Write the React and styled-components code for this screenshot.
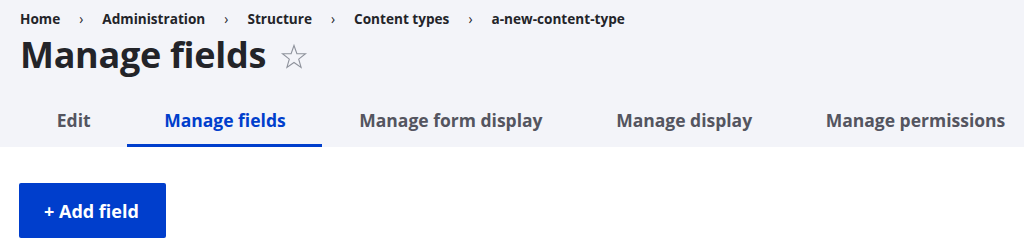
import React from "react";
import styled, { createGlobalStyle } from "styled-components";

const Global = createGlobalStyle`
  html, body { margin: 0; padding: 0; background: #ffffff; }
  body { font-family: "Open Sans", "Noto Sans", sans-serif; color: #232429; }
  * { box-sizing: border-box; }
`;

const Header = styled.header`
  background: #f3f4f9;
  padding: 9px 20px 0;
`;

const Crumbs = styled.ol`
  display: flex;
  align-items: center;
  list-style: none;
  margin: 0;
  padding: 0;
  font-size: 13.6px;
  line-height: 20px;
  font-weight: 700;
  color: #232429;
`;

const Crumb = styled.li`
  display: flex;
  align-items: center;
`;

const Sep = styled.span`
  margin: 0 19px;
  font-weight: 400;
  color: #232429;
`;

const TitleRow = styled.div`
  display: flex;
  align-items: center;
  gap: 14px;
  margin-top: 4px;
`;

const Title = styled.h1`
  margin: 0;
  font-size: 36px;
  line-height: 44px;
  font-weight: 700;
  color: #232429;
  letter-spacing: -0.3px;
`;

const StarButton = styled.span`
  display: inline-flex;
  width: 28px;
  height: 28px;
  margin-top: 4px;
`;

const Tabs = styled.nav`
  display: flex;
  margin-top: 18px;
`;

const Tab = styled.a`
  display: block;
  padding: 13px 36.8px 12px;
  font-size: 17.5px;
  line-height: 24px;
  font-weight: 700;
  color: ${(p) => (p.$active ? "#003ecc" : "#545560")};
  text-decoration: none;
  border-bottom: 3px solid ${(p) => (p.$active ? "#003ecc" : "transparent")};
  white-space: nowrap;
`;

const Content = styled.main`
  padding: 36px 19px;
`;

const Button = styled.button`
  display: inline-flex;
  align-items: center;
  height: 55px;
  padding: 0 27px 0 25px;
  border: 0;
  border-radius: 2px;
  background: #003ecc;
  color: #ffffff;
  font-family: inherit;
  font-size: 18px;
  font-weight: 700;
  line-height: 24px;
`;

const Star = () => (
  <svg width="28" height="28" viewBox="0 0 28 28" fill="none">
    <path
      d="M14 2.5 L16.9 10.6 L25.5 10.8 L18.7 16.1 L21.1 24.4 L14 19.5 L6.9 24.4 L9.3 16.1 L2.5 10.8 L11.1 10.6 Z"
      stroke="#8e929c"
      strokeWidth="1.1"
      strokeLinejoin="miter"
    />
  </svg>
);

const crumbs = ["Home", "Administration", "Structure", "Content types", "a-new-content-type"];
const tabs = ["Edit", "Manage fields", "Manage form display", "Manage display", "Manage permissions"];

export default function App() {
  return (
    <>
      <Global />
      <Header>
        <Crumbs>
          {crumbs.map((c, i) => (
            <Crumb key={c}>
              {i > 0 && <Sep>›</Sep>}
              {c}
            </Crumb>
          ))}
        </Crumbs>
        <TitleRow>
          <Title>Manage fields</Title>
          <StarButton>
            <Star />
          </StarButton>
        </TitleRow>
        <Tabs>
          {tabs.map((t) => (
            <Tab key={t} $active={t === "Manage fields"}>
              {t}
            </Tab>
          ))}
        </Tabs>
      </Header>
      <Content>
        <Button>+ Add field</Button>
      </Content>
    </>
  );
}
